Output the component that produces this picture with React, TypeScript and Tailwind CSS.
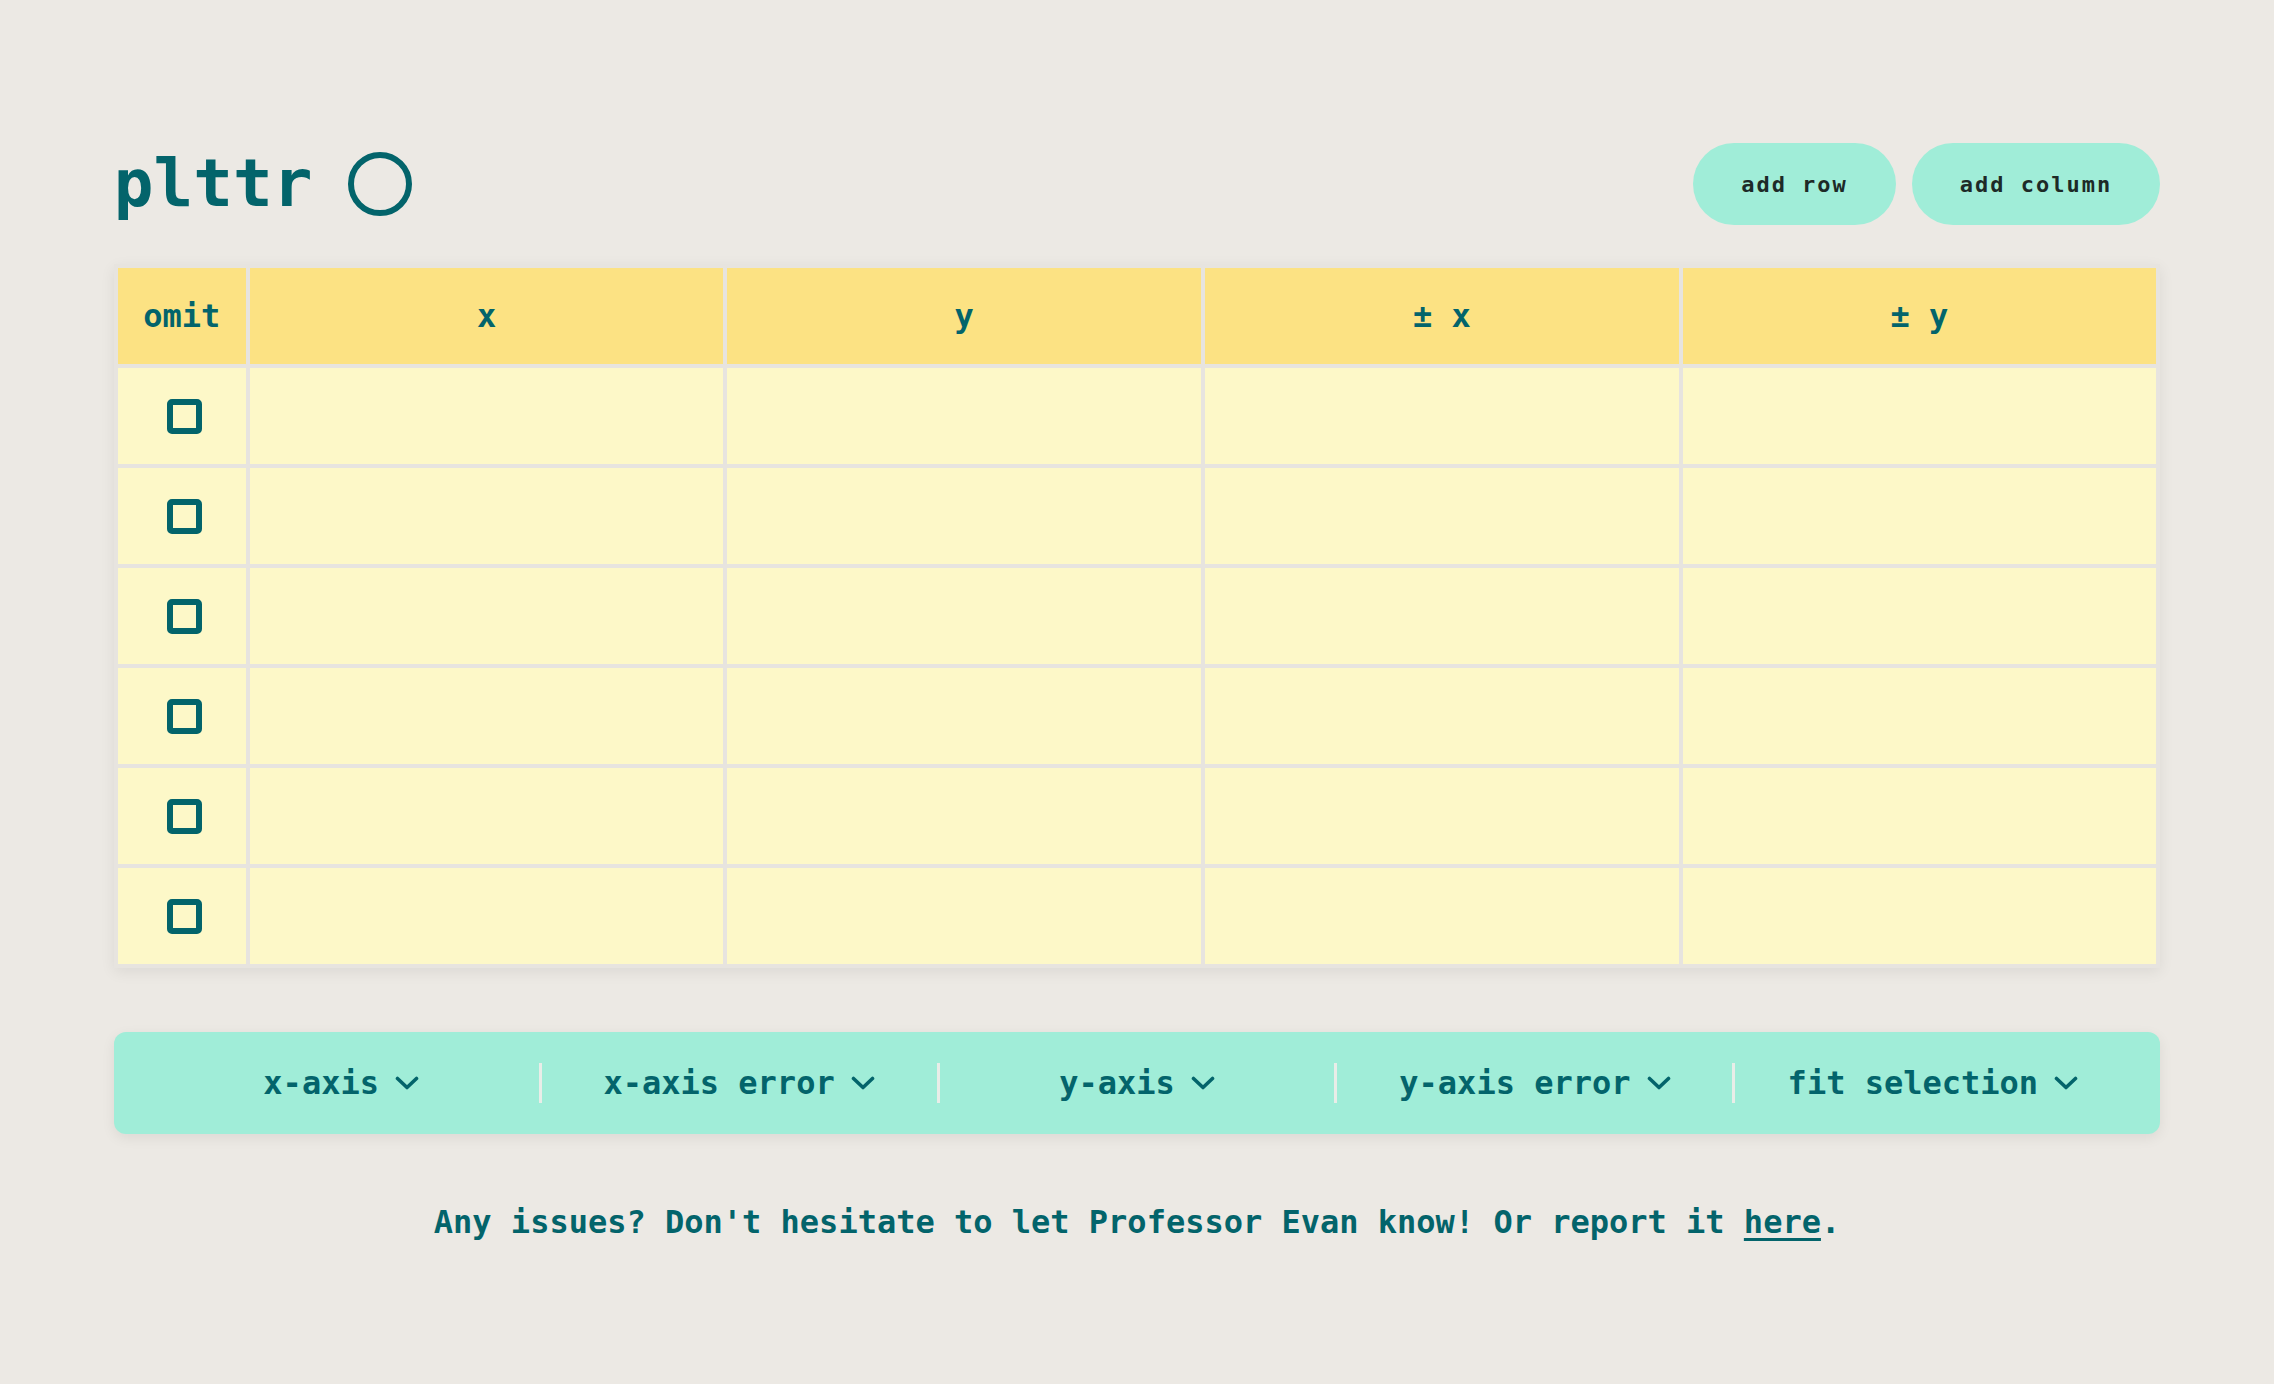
import React from 'react';

const columns = ['x', 'y', '± x', '± y'];
const rows = [0, 1, 2, 3, 4, 5];
const menus = ['x-axis', 'x-axis error', 'y-axis', 'y-axis error', 'fit selection'];

const Chevron = () => (
  <svg width="24" height="14" viewBox="0 0 24 14" fill="none" className="shrink-0">
    <polyline points="2.5,2.5 12,11.5 21.5,2.5" stroke="currentColor" strokeWidth="3.6" strokeLinecap="round" strokeLinejoin="round" />
  </svg>
);

const App = () => {
  return (
    <div className="min-h-screen bg-[#ece9e4] px-[5%] pt-[143px] pb-20 font-['DejaVu_Sans_Mono','Liberation_Mono',monospace] text-[#03646b]">
      {/* header */}
      <div className="flex h-[82px] items-center justify-between">
        <div className="flex items-center gap-[36px]">
          <h1 className="text-[66px] font-bold leading-none">plttr</h1>
          <div className="h-16 w-16 rounded-full border-[6px] border-[#03646b]" />
        </div>
        <div className="flex gap-4">
          <button className="h-[82px] rounded-full bg-[#a0edd8] px-12 text-[22px] font-bold tracking-[2px] text-[#1d2a27]">
            add row
          </button>
          <button className="h-[82px] rounded-full bg-[#a0edd8] px-12 text-[22px] font-bold tracking-[2px] text-[#1d2a27]">
            add column
          </button>
        </div>
      </div>

      {/* data table */}
      <table className="mt-[39px] w-full table-fixed border-separate border-spacing-1 bg-[#e7e4df] shadow-[0_4px_14px_rgba(0,0,0,0.07)]">
        <thead>
          <tr>
            <th className="h-[96px] w-[128px] bg-[#fce283] text-[32px] font-bold">omit</th>
            {columns.map(col => (
              <th key={col} className="h-[96px] bg-[#fce283] text-[32px] font-bold">
                {col}
              </th>
            ))}
          </tr>
        </thead>
        <tbody>
          {rows.map(row => (
            <tr key={row}>
              <td className="h-[96px] bg-[#fdf8c8] text-center align-middle">
                <span className="inline-block h-[35px] w-[35px] translate-x-[3px] rounded-[5px] border-[6px] border-[#03646b] align-middle" />
              </td>
              {columns.map(col => (
                <td key={col} className="h-[96px] bg-[#fdf8c8]" />
              ))}
            </tr>
          ))}
        </tbody>
      </table>

      {/* plot options */}
      <div className="mt-16 flex h-[102px] items-center rounded-xl bg-[#a0edd8] px-[30px] shadow-[0_4px_14px_rgba(0,0,0,0.07)]">
        {menus.map((menu, i) => (
          <React.Fragment key={menu}>
            {i > 0 && <div className="h-10 w-[3px] bg-[#e9ede8]" />}
            <div className="flex flex-1 items-center justify-center gap-4 text-[32px] font-bold">
              <span>{menu}</span>
              <Chevron />
            </div>
          </React.Fragment>
        ))}
      </div>

      <p className="mt-16 text-center text-[32px] font-bold leading-[1.5]">
        Any issues? Don't hesitate to let Professor Evan know! Or report it{' '}
        <a href="#" className="underline decoration-[3px] underline-offset-[5px]">here</a>.
      </p>
    </div>
  );
};

export default App;
